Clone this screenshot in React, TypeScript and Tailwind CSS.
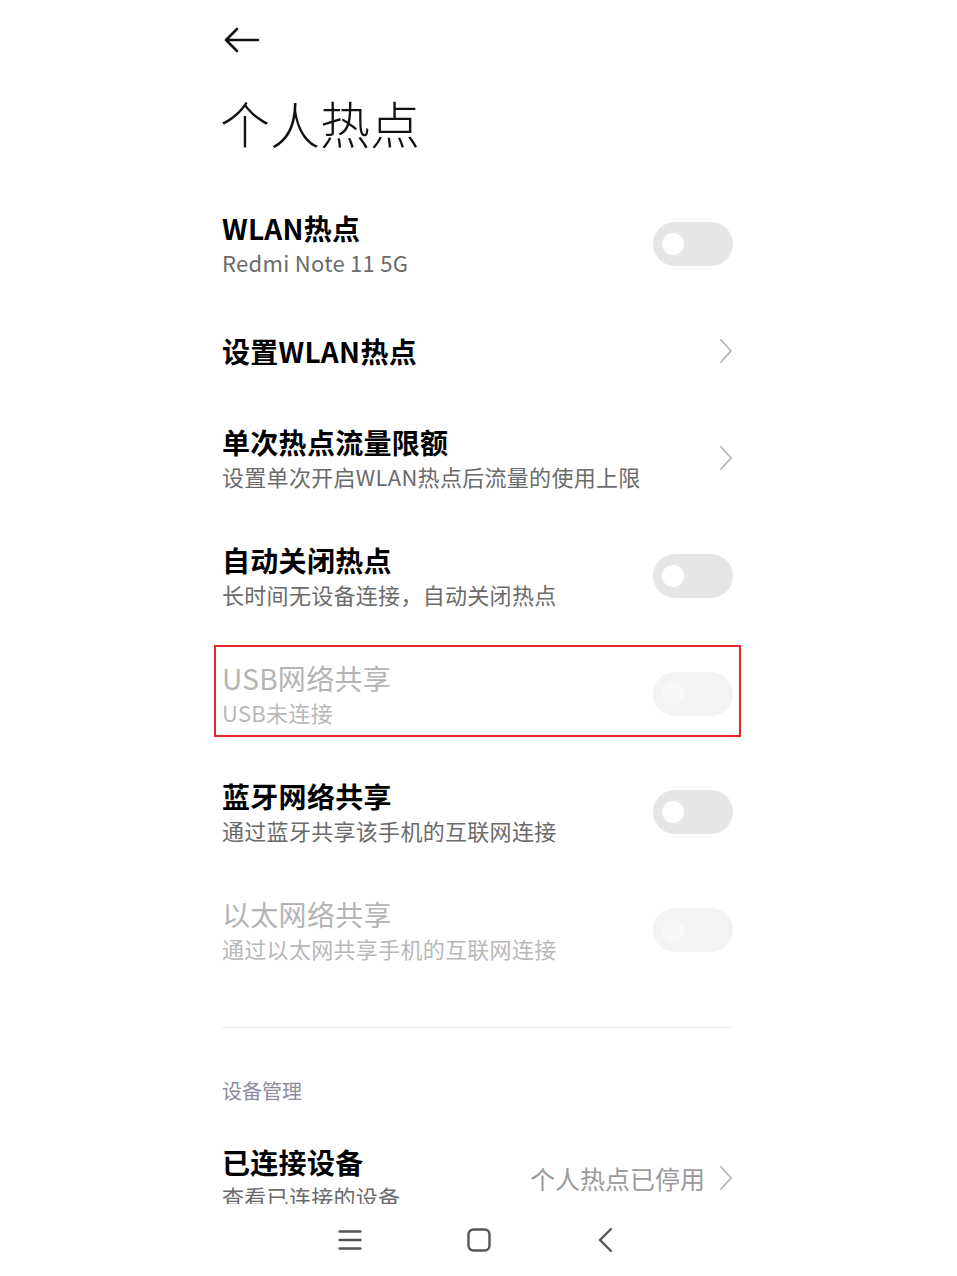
import React from 'react'

function Toggle({ disabled }: { disabled?: boolean }) {
  return (
    <div
      className={
        'relative w-[80px] h-[44px] rounded-full shrink-0 flex items-center pl-[9px] ' +
        (disabled ? 'bg-[#f3f3f3]' : 'bg-[#e6e6e6]')
      }
    >
      <div
        className={
          'w-[22px] h-[22px] rounded-full ' +
          (disabled ? 'bg-[#f8f8f8]' : 'bg-white')
        }
      />
    </div>
  )
}

function Chevron() {
  return (
    <svg width="14" height="26" viewBox="0 0 14 26" className="shrink-0">
      <path d="M2 2 L12 13 L2 24" fill="none" stroke="#b3b3b3" strokeWidth="1.8" strokeLinecap="round" strokeLinejoin="round" />
    </svg>
  )
}

function Row({ title, sub, right, disabled, tall = true, boxed }: any) {
  return (
    <div className={'relative flex items-center justify-between ' + (tall ? 'h-[118px]' : 'h-[96px]')}>
      <div className="flex flex-col">
        <div
          className={
            'text-[28px] leading-[36px] tracking-[0.3px] ' +
            (disabled ? 'text-[#b4b4b4] font-normal' : 'text-black font-semibold')
          }
        >
          {title}
        </div>
        {sub && (
          <div
            className={
              'text-[22px] leading-[32px] tracking-[0.3px] ' +
              (disabled ? 'text-[#b8b8b8]' : 'text-[#6b6b6b]')
            }
          >
            {sub}
          </div>
        )}
      </div>
      {right}
      {boxed && (
        <div className="absolute left-[-8px] right-[-8px] top-[10px] bottom-[16px] border-2 border-[#e3262b]" />
      )}
    </div>
  )
}

export default function App() {
  return (
    <div className="w-[957px] h-[1276px] bg-white flex flex-col overflow-hidden font-['Noto_Sans_CJK_SC',sans-serif]">
      <div className="h-[1204px] overflow-hidden">
        <div className="w-[511px] ml-[222px]">
          <div className="h-[80px] flex items-center pl-[2px]">
            <svg width="36" height="26" viewBox="0 0 36 26">
              <path d="M2 13 H34 M13 2 L2 13 L13 24" fill="none" stroke="#111" strokeWidth="2.6" strokeLinecap="round" strokeLinejoin="round" />
            </svg>
          </div>
          <div className="pt-[18px] pb-[39px]">
            <div className="text-[50px] leading-[48px] font-light text-[#111] -ml-[2px]">个人热点</div>
          </div>

          <Row title="WLAN热点" sub="Redmi Note 11 5G" right={<Toggle />} />
          <Row title="设置WLAN热点" tall={false} right={<Chevron />} />
          <Row title="单次热点流量限额" sub="设置单次开启WLAN热点后流量的使用上限" right={<Chevron />} />
          <Row title="自动关闭热点" sub="长时间无设备连接，自动关闭热点" right={<Toggle />} />
          <Row title="USB网络共享" sub="USB未连接" disabled boxed right={<Toggle disabled />} />
          <Row title="蓝牙网络共享" sub="通过蓝牙共享该手机的互联网连接" right={<Toggle />} />
          <Row title="以太网络共享" sub="通过以太网共享手机的互联网连接" disabled right={<Toggle disabled />} />

          <div className="mt-[38px] h-px bg-[#ececec]" />

          <div className="pt-[49px] text-[20px] leading-[28px] text-[#8c8c9e]">设备管理</div>

          <div className="pt-[39px] flex items-center justify-between">
            <div className="flex flex-col">
              <div className="text-[28px] leading-[36px] tracking-[0.3px] font-semibold text-black">已连接设备</div>
              <div className="text-[22px] leading-[32px] tracking-[0.3px] text-[#6b6b6b]">查看已连接的设备</div>
            </div>
            <div className="flex items-center gap-[14px]">
              <span className="text-[25px] leading-[32px] text-[#9a9a9a]">个人热点已停用</span>
              <Chevron />
            </div>
          </div>
        </div>
      </div>

      <div className="flex-1 flex items-center justify-center gap-[105px] pr-[6px] pb-[1px]">
        <svg width="24" height="22" viewBox="0 0 24 22">
          <path d="M1.5 2.5 H22.5 M1.5 11 H22.5 M1.5 19.5 H22.5" fill="none" stroke="#555" strokeWidth="2.4" strokeLinecap="round" />
        </svg>
        <svg width="24" height="24" viewBox="0 0 24 24">
          <rect x="1.5" y="1.5" width="21" height="21" rx="5" fill="none" stroke="#555" strokeWidth="2.4" />
        </svg>
        <svg width="18" height="26" viewBox="0 0 18 26">
          <path d="M15 2 L4 13 L15 24" fill="none" stroke="#555" strokeWidth="2.4" strokeLinecap="round" strokeLinejoin="round" />
        </svg>
      </div>
    </div>
  )
}
